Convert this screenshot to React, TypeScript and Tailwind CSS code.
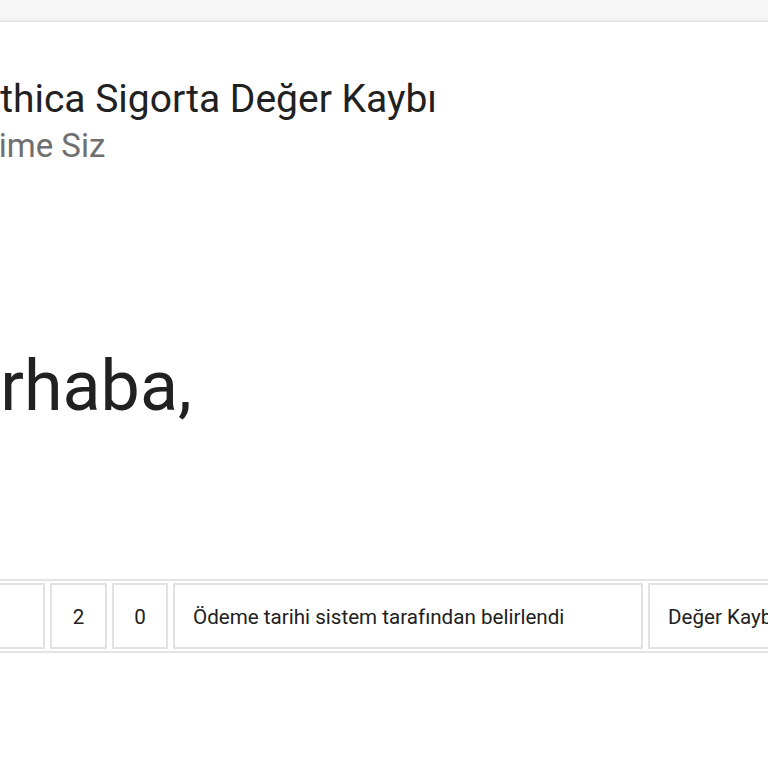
export default function App() {
  const cells = [
    { text: "", w: "w-[80px]", align: "text-center" },
    { text: "2", w: "w-[57px]", align: "text-center" },
    { text: "0", w: "w-[56px]", align: "text-center" },
    { text: "Ödeme tarihi sistem tarafından belirlendi", w: "w-[470px]", align: "text-left" },
    { text: "Değer Kaybı", w: "w-[200px]", align: "text-left" },
  ];

  return (
    <div className="w-[768px] h-[768px] overflow-hidden bg-white font-['Roboto',sans-serif] text-[#212121]">
      {/* Top bar */}
      <div className="h-[18px] bg-[#f7f7f7]" />
      <div className="h-[4px] bg-[#f1f1f1] border-b border-[#dedede]" />

      {/* Subject */}
      <div className="mt-[53px] ml-[-22px] whitespace-nowrap text-[39px] leading-[48px]">
        Ethica Sigorta Değer Kaybı
      </div>
      <div className="mt-[3px] ml-[-22px] whitespace-nowrap text-[33px] leading-[40px] text-[#6f6f6f]">
        Kime Siz
      </div>

      {/* Greeting */}
      <div className="mt-[175px] ml-[-98px] whitespace-nowrap text-[70px] leading-[90px]">
        Merhaba,
      </div>

      {/* Table */}
      <div className="mt-[148px] ml-[-40px] w-[900px] border-y-2 border-[#e4e4e4] py-[2px]">
        <table className="border-separate border-spacing-x-[5px] border-spacing-y-0 text-[20.6px]">
          <tbody>
            <tr>
              {cells.map((c, i) => (
                <td
                  key={i}
                  className={`${c.w} ${c.align} h-[66px] border-2 border-[#e2e2e2] px-[18px] pt-[3px] whitespace-nowrap`}
                >
                  {c.text}
                </td>
              ))}
            </tr>
          </tbody>
        </table>
      </div>
    </div>
  );
}
